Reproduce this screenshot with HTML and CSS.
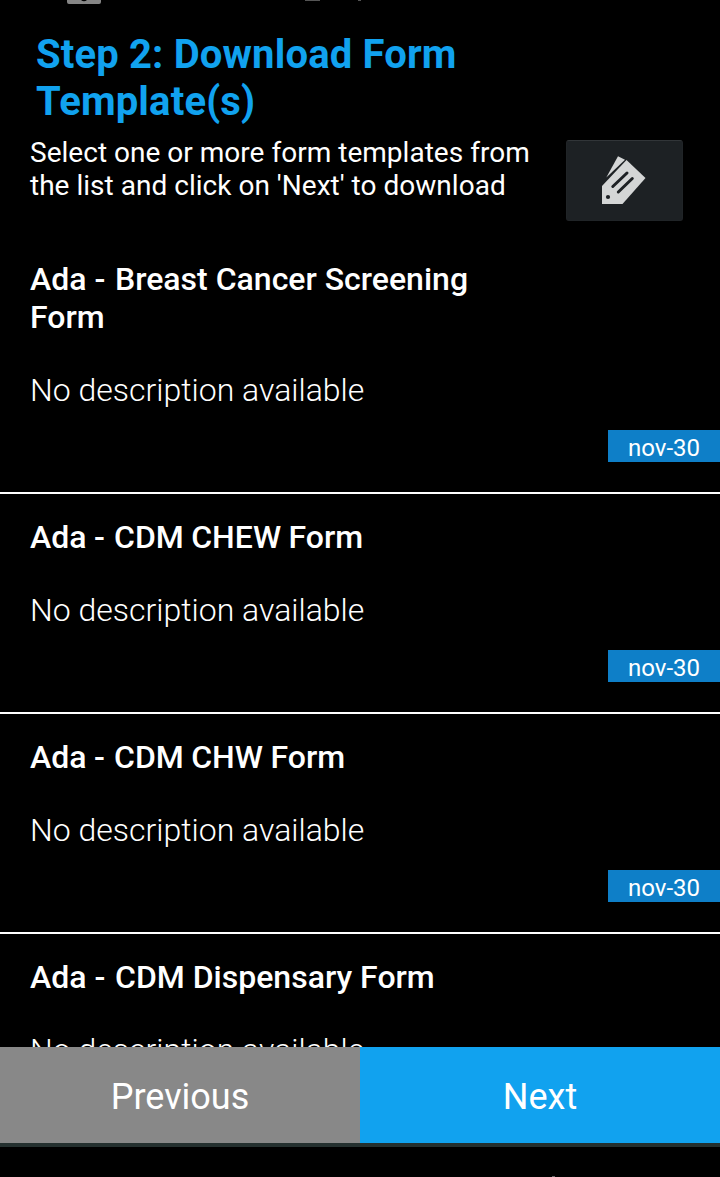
FILE: index.html
```html
<!DOCTYPE html>
<html lang="en">
<head>
<meta charset="utf-8">
<title>Download Form Templates</title>
<link rel="stylesheet" href="styles.css">
</head>
<body>
<main class="screen">
  <div class="status">
    <svg width="720" height="6" viewBox="0 0 720 6"><path d="M67 0H81Q84 2.5 87 0H101V2Q101 4 99 4H69Q67 4 67 2Z" fill="#858585"/><path d="M305 0H320V1H305ZM358 0H361V1H358Z" fill="#555"/></svg>
  </div>
  <header class="header">
    <h1 class="title">Step 2: Download Form<br>Template(s)</h1>
    <div class="intro">
      <p class="hint">Select one or more form templates from<br>the list and click on 'Next' to download</p>
      <button class="tag-button" aria-label="Tags">
        <svg width="60" height="60" viewBox="0 0 60 60"><path d="M23 6.3L30 9.7L11.3 27.5Z" fill="#d4d6d6"/><path d="M7 36L31.5 10L50.5 28L27.5 54H7Z" fill="#d4d6d6"/><path d="M17.8 36.5L32 23M23.3 42L37.3 28.5" stroke="#1d2124" stroke-width="3" stroke-linecap="round"/><circle cx="13" cy="47" r="2.1" fill="#1d2124"/></svg>
      </button>
    </div>
  </header>
  <section class="list">
    <article class="item tall"><h2 class="name">Ada <span class="dash">-</span> Breast Cancer Screening<br>Form</h2><p class="desc">No description available</p><span class="date">nov-30</span></article>
    <article class="item"><h2 class="name tight">Ada <span class="dash">-</span> CDM CHEW Form</h2><p class="desc">No description available</p><span class="date">nov-30</span></article>
    <article class="item"><h2 class="name tight">Ada <span class="dash">-</span> CDM CHW Form</h2><p class="desc">No description available</p><span class="date">nov-30</span></article>
    <article class="item"><h2 class="name">Ada <span class="dash">-</span> CDM Dispensary Form</h2><p class="desc">No description available</p></article>
  </section>
  <nav class="actions"><button class="action previous">Previous</button><button class="action next">Next</button></nav>
  <footer class="bottom"><i class="bottom-mark"></i></footer>
</main>
</body>
</html>
```
FILE: styles.css
```css
* { box-sizing: border-box; margin: 0; }
body { background: #000; color: #fff; font-family: Roboto, sans-serif; }
.screen { display: flex; flex-direction: column; width: 720px; height: 1177px; overflow: hidden; }
.status { display: flex; height: 31px; }
.header { height: 223px; }
.title { padding-left: 36px; font-size: 40px; line-height: 47px; letter-spacing: 0.16px; font-weight: 700; color: #11a2ef; }
.intro { display: flex; justify-content: space-between; padding: 11px 37.5px 0 30px; }
.hint { font-size: 28px; line-height: 33px; letter-spacing: 0.02px; white-space: nowrap; }
.tag-button { display: flex; width: 117px; height: 81px; margin-top: 4px; padding: 9px 0 0 28.5px; background: #1d2124; border: 1px solid #202427; border-top-color: #313538; border-radius: 3px; }
.list { flex: 1; min-height: 0; overflow: hidden; }
.item { display: flex; flex-direction: column; height: 220px; padding-top: 24px; border-bottom: 2px solid #fff; }
.item.tall { height: 240px; padding-top: 6px; }
.name { padding-left: 30px; font-size: 32px; line-height: 38px; font-weight: 500; }
.tight { word-spacing: -0.5px; }
.dash { letter-spacing: 1.7px; }
.desc { padding: 35px 0 0 30px; font-size: 32px; line-height: 38px; font-weight: 300; }
.date { align-self: flex-end; width: 112px; height: 32px; margin-top: 21px; padding-left: 20px; background: #0e7fc8; font-size: 24px; line-height: 36px; }
.actions { display: flex; height: 96px; }
.action { flex: 1; border: 0; padding: 4px 0 0; font: 36px Roboto, sans-serif; color: #fff; }
.previous { background: #888; }
.next { background: #11a2ef; }
.bottom { display: flex; align-items: flex-end; height: 34px; padding-left: 552px; border-top: 4px solid #24302f; }
.bottom-mark { width: 3px; height: 1px; background: #666; }
```
